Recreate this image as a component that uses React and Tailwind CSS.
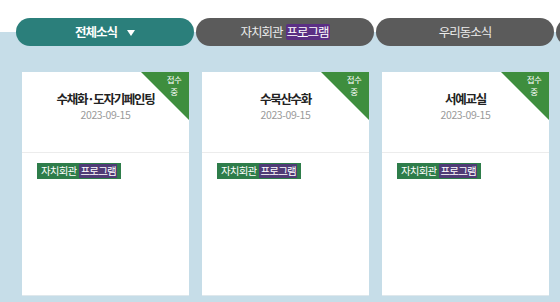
const FONT = "font-['Noto_Sans_CJK_KR','Noto_Sans',sans-serif]";

const tabs = [
  { label: '전체소식', active: true },
  { label: '자치회관', mark: '프로그램' },
  { label: '우리동소식' },
  { label: '' },
];

const programs = [
  { title: '수채화·도자기페인팅', date: '2023-09-15' },
  { title: '수묵산수화', date: '2023-09-15' },
  { title: '서예교실', date: '2023-09-15' },
];

function Tab({ tab }) {
  if (tab.active) {
    return (
      <div className="w-[178px] h-7 shrink-0 rounded-full bg-[#2b7f7b] flex items-center justify-center gap-[10px] text-white">
        <span className="text-[12.5px] font-bold tracking-[-1px]">{tab.label}</span>
        <span className="w-0 h-0 border-l-[4px] border-r-[4px] border-t-[6px] border-l-transparent border-r-transparent border-t-white mt-[1px]" />
      </div>
    );
  }
  return (
    <div className="w-[178px] h-7 shrink-0 rounded-full bg-[#5b5b5b] flex items-center justify-center text-[12.5px] tracking-[-1px] text-[#ececec]">
      {tab.label}
      {tab.mark && (
        <span className="ml-[3px] px-[1px] leading-4 rounded-[2px] bg-[#5b2f84] text-white">{tab.mark}</span>
      )}
    </div>
  );
}

function ProgramCard({ item }) {
  return (
    <div className="relative w-[167px] h-[224px] shrink-0 bg-white border-b border-[#dfe8ec]">
      <div className="absolute top-0 right-0 w-12 h-12 bg-[#3e8e3e] [clip-path:polygon(0_0,100%_0,100%_100%)]" />
      <div className="absolute top-[1px] right-[5px] w-5 text-center text-white text-[8.5px] leading-[12px] tracking-[-0.5px]">
        <div>접수</div>
        <div>중</div>
      </div>
      <div className="h-[81px] border-b border-[#ececec] flex flex-col items-center pt-[19px] gap-[2px]">
        <div className="text-[12.5px] leading-[15px] font-bold text-[#222] tracking-[-1.3px]">{item.title}</div>
        <div className="text-[10.5px] leading-[14px] text-[#9a9a9a] tracking-[-0.4px]">{item.date}</div>
      </div>
      <div className="px-[15px] pt-[3px]">
        <span className="inline-flex items-center h-4 px-[4px] bg-[#2e7d4a] text-white text-[10.5px] tracking-[-0.8px]">
          자치회관
          <span className="ml-[3px] px-[1px] leading-[14px] bg-[#4f3b76]">프로그램</span>
        </span>
      </div>
    </div>
  );
}

export default function App() {
  return (
    <div
      className={`${FONT} w-[560px] h-[302px] overflow-hidden bg-[linear-gradient(to_bottom,#ffffff_32px,#c6dde8_32px)]`}
    >
      <div className="flex gap-[2px] pl-4 pt-[18px]">
        {tabs.map((t, i) => (
          <Tab key={i} tab={t} />
        ))}
      </div>
      <div className="flex gap-[13px] pl-[22px] mt-[26px]">
        {programs.map((p) => (
          <ProgramCard key={p.title} item={p} />
        ))}
      </div>
    </div>
  );
}
